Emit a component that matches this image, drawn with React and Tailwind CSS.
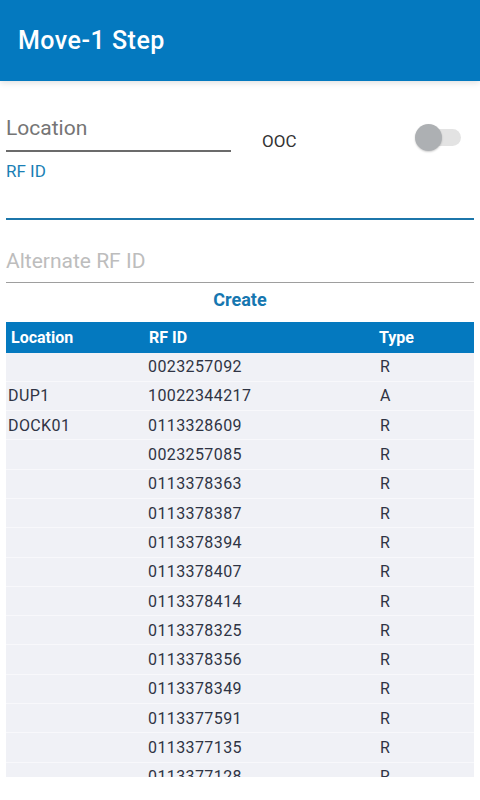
const rows = [
  ["", "0023257092", "R"],
  ["DUP1", "10022344217", "A"],
  ["DOCK01", "0113328609", "R"],
  ["", "0023257085", "R"],
  ["", "0113378363", "R"],
  ["", "0113378387", "R"],
  ["", "0113378394", "R"],
  ["", "0113378407", "R"],
  ["", "0113378414", "R"],
  ["", "0113378325", "R"],
  ["", "0113378356", "R"],
  ["", "0113378349", "R"],
  ["", "0113377591", "R"],
  ["", "0113377135", "R"],
  ["", "0113377128", "R"],
];

export default function App() {
  return (
    <div className="w-[480px] h-[800px] bg-white overflow-hidden font-['Roboto',sans-serif]">
      {/* App bar */}
      <div className="h-[81px] bg-[#0479bf] flex items-center px-[18px] shadow-[0_2px_6px_rgba(0,0,0,0.12)]">
        <h1 className="text-white text-[25px] font-medium tracking-[0.5px]">Move-1 Step</h1>
      </div>

      <div className="px-[6px]">
        {/* Location + OOC */}
        <div className="flex items-start pt-[33px]">
          <div className="w-[225px]">
            <div className="h-[36px] text-[21px] text-[#757575] leading-[28px]">Location</div>
            <div className="h-[2px] bg-[#6b6b6b]"></div>
          </div>
          <div className="ml-[31px] mt-[15px] text-[17px] text-[#333]">OOC</div>
          <div className="ml-auto mr-[13px] mt-[9px] relative w-[46px] h-[28px] flex items-center">
            <div className="absolute left-[14px] w-[32px] h-[17px] rounded-full bg-[#e3e3e3]"></div>
            <div className="absolute left-0 w-[27px] h-[27px] rounded-full bg-[#adb0b3] shadow-[0_1px_2px_rgba(0,0,0,0.2)]"></div>
          </div>
        </div>

        {/* RF ID */}
        <div className="mt-[6px] text-[17px] text-[#1a7fb5] leading-[20px]">RF ID</div>
        <div className="mt-[37px] h-[2px] bg-[#1c76aa]"></div>

        {/* Alternate RF ID */}
        <div className="mt-[27px] text-[21px] text-[#bdbdbd] leading-[28px]">Alternate RF ID</div>
        <div className="mt-[7px] h-px bg-[#9e9e9e]"></div>

        <div className="mt-[6px] text-center text-[18px] font-bold text-[#1677b0] leading-[22px]">Create</div>

        {/* Table */}
        <div className="mt-[11px] h-[455px] overflow-hidden">
          <div className="h-[31px] bg-[#0479bf] flex items-center pt-[2px] text-white text-[16px] font-bold">
            <div className="w-[143px] pl-[5px]">Location</div>
            <div className="w-[230px]">RF ID</div>
            <div>Type</div>
          </div>
          {rows.map((r, i) => (
            <div
              key={i}
              className="h-[29.3px] bg-[#f0f1f6] border-b border-[#f8f8fb] flex items-center pt-[1px] text-[16px] tracking-[0.4px] text-[#2f3444]"
            >
              <div className="w-[142px] pl-[2px]">{r[0]}</div>
              <div className="w-[232px]">{r[1]}</div>
              <div>{r[2]}</div>
            </div>
          ))}
        </div>
      </div>
    </div>
  );
}
